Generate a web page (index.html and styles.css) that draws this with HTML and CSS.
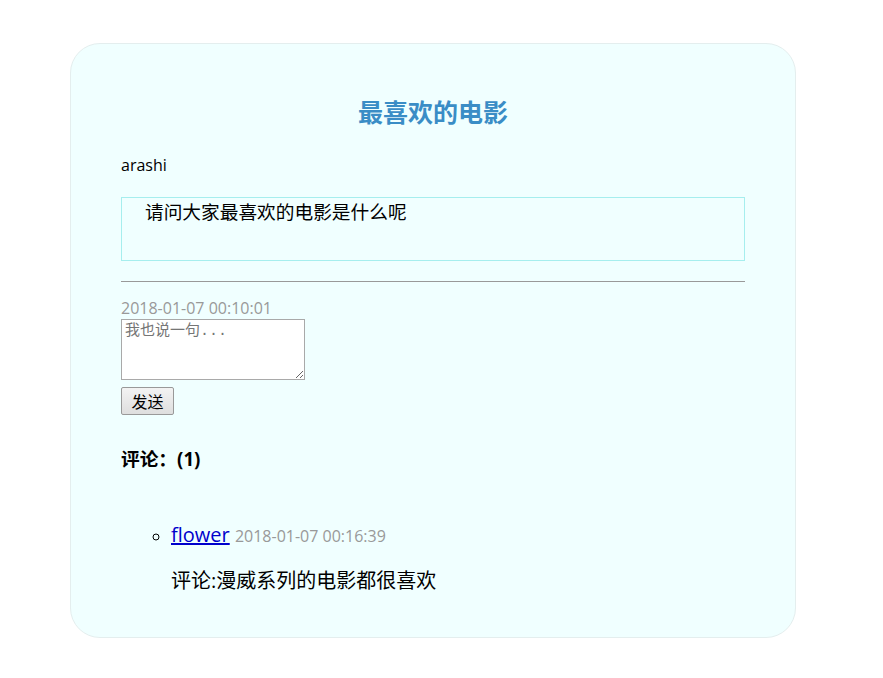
FILE: index.html
```html
<!DOCTYPE html>
<html lang="zh-CN">
<head>
<meta charset="UTF-8">
<meta name="viewport" content="width=device-width, initial-scale=1.0">
<title>最喜欢的电影</title>
<link rel="stylesheet" href="styles.css">
</head>
<body>
    <div class="card">
        <h2 class="title">最喜欢的电影</h2>
        <div class="author">arashi</div>
        <div class="content">请问大家最喜欢的电影是什么呢</div>
        <hr class="line">
        <div class="time">2018-01-07 00:10:01</div>
        <form class="reply">
            <textarea placeholder="我也说一句..."></textarea>
            <button type="button">发送</button>
        </form>
        <h3 class="count">评论：(1)</h3>
        <ul class="comments">
            <li>
                <div class="comment-head"><a href="#">flower</a> <span class="time">2018-01-07 00:16:39</span></div>
                <p class="comment-text">评论:漫威系列的电影都很喜欢</p>
            </li>
        </ul>
    </div>
</body>
</html>
```

FILE: styles.css
```css
body {
    font-family: "Open Sans", "Noto Sans CJK SC", sans-serif;
    margin: 0;
    padding: 43px 0 0 70px;
    background: #fff;
    color: #000;
}

.card {
    width: 624px;
    padding: 49px 50px 41px;
    background-color: #f0ffff;
    border: 1px solid #e4eeee;
    border-radius: 30px;
}

.title {
    margin: 0;
    font-size: 25px;
    line-height: 38px;
    text-align: center;
    color: #3a8dc6;
}

.author {
    margin-top: 22px;
    font-size: 16px;
    line-height: 24px;
}

.content {
    margin-top: 20px;
    height: 64px;
    box-sizing: border-box;
    padding: 0 23px;
    border: 1px solid #a6eeee;
    font-size: 18.7px;
    line-height: 27px;
}

.line {
    margin: 20px 0 16px;
    height: 0;
    border: 0;
    border-top: 1px solid #999;
}

.time {
    font-size: 16px;
    line-height: 21px;
    color: #999;
}

.reply textarea {
    display: block;
    width: 184px;
    height: 61px;
    box-sizing: border-box;
    margin: 0;
    padding: 2px 3px;
    border: 1px solid #a9a9a9;
    background: #fff;
    font-family: "Liberation Mono", "Noto Sans CJK SC", monospace;
    font-size: 15px;
    line-height: 19px;
}

.reply textarea::placeholder {
    color: #757575;
}

.reply button {
    display: block;
    margin-top: 7px;
    width: 53px;
    height: 28px;
    padding: 0;
    border: 1px solid #999;
    border-radius: 2px;
    background: linear-gradient(#f3f3f3, #dedede);
    font-family: "Noto Sans CJK SC", sans-serif;
    font-size: 16px;
    color: #000;
}

.count {
    margin: 30px 0 0;
    font-size: 18.7px;
    line-height: 27px;
}

.comments {
    margin: 48px 0 0;
    padding-left: 50px;
    list-style: circle;
}

.comment-head {
    font-size: 20px;
    line-height: 30px;
}

.comment-head a {
    color: #0000cc;
}

.comment-text {
    margin: 16px 0 0;
    font-size: 20px;
    line-height: 30px;
}
```
